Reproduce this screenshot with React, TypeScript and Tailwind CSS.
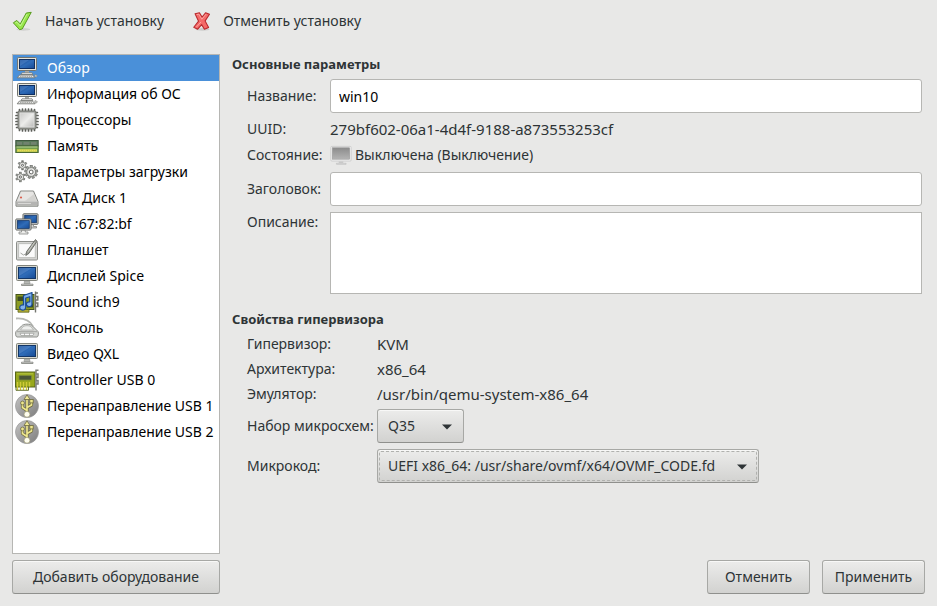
import React, { useState } from "react";

type IconProps = { className?: string };

const Svg = ({ children, className = "h-6 w-6" }: { children: React.ReactNode; className?: string }) => (
  <svg viewBox="0 0 24 24" className={`${className} shrink-0`} aria-hidden="true">
    {children}
  </svg>
);

const Defs = () => (
  <svg className="absolute h-0 w-0" aria-hidden="true">
    <defs>
      <linearGradient id="screen" x1="0" y1="0" x2="1" y2="1">
        <stop offset="0" stopColor="#17488f" />
        <stop offset="0.5" stopColor="#2f6cb8" />
        <stop offset="1" stopColor="#164a94" />
      </linearGradient>
      <linearGradient id="silver" x1="0" y1="0" x2="1" y2="1">
        <stop offset="0" stopColor="#c9c9c7" />
        <stop offset="0.5" stopColor="#ececea" />
        <stop offset="1" stopColor="#b9b9b7" />
      </linearGradient>
      <linearGradient id="usbGrey" x1="0" y1="0" x2="1" y2="1">
        <stop offset="0" stopColor="#c4c4c4" />
        <stop offset="1" stopColor="#7c7c7c" />
      </linearGradient>
      <linearGradient id="offScreen" x1="0" y1="0" x2="0" y2="1">
        <stop offset="0" stopColor="#8c8c8c" />
        <stop offset="1" stopColor="#b4b4b4" />
      </linearGradient>
    </defs>
  </svg>
);

const ComputerIcon = ({ className }: IconProps) => (
  <Svg className={className}>
    <rect x="2.5" y="1.5" width="19" height="13" rx="1" fill="#e4e4dc" stroke="#73756f" />
    <rect x="4.5" y="3.5" width="15" height="9" fill="url(#screen)" stroke="#0f2f62" />
    <path d="M5 4h9L5 10z" fill="#6d9fdc" opacity="0.35" />
    <path d="M10 15h4v2h-4z" fill="#a8aaa6" />
    <path d="M7 16.8h10l1 1.7H6z" fill="#f4f4f2" stroke="#777975" strokeWidth="0.8" />
    <path d="M4.500 19h13l2.600 2.800H2.200z" fill="#ededeb" stroke="#777975" strokeWidth="0.9" />
    <path d="M5 20.4h12" stroke="#8f918d" strokeWidth="0.8" strokeDasharray="1.5 0.7" />
    <path d="M20 18.500l2.400 1.200-1.200 1.500-1.500-.8z" fill="#d8d8d6" stroke="#7d7f7b" strokeWidth="0.6" />
  </Svg>
);

const DisplayIcon = ({ className }: IconProps) => (
  <Svg className={className}>
    <rect x="1.5" y="1.5" width="21" height="15" rx="1" fill="#d6d7cf" stroke="#82847c" />
    <rect x="3.5" y="3.5" width="17" height="11" fill="url(#screen)" stroke="#133666" />
    <path d="M4 4h13L4 12z" fill="#7aaae2" opacity="0.35" />
    <path d="M9.500 17h5l.6 2.500H9z" fill="#b8bab6" stroke="#8b8d89" strokeWidth="0.6" />
    <path d="M6.500 20.200h11.500v1.300H6.500z" fill="#f3f3f1" stroke="#888a85" strokeWidth="0.9" />
  </Svg>
);

const CpuIcon = ({ className }: IconProps) => (
  <Svg className={className}>
    <g stroke="#5c5e59" strokeWidth="1.7" strokeLinecap="round">
      <path d="M4.500 1.600v3M7.500 1v3M10.500 1v3M13.500 1v3M16.500 1v3M19.500 1.600v3" />
      <path d="M4.500 19.500v2.900M7.500 20v3M10.500 20v3M13.500 20v3M16.500 20v3M19.500 19.500v2.900" />
      <path d="M1.600 4.500h3M1 7.500h3M1 10.500h3M1 13.500h3M1 16.500h3M1.600 19.500h3" />
      <path d="M19.500 4.500h2.900M20 7.500h3M20 10.500h3M20 13.500h3M20 16.500h3M19.500 19.500h2.900" />
    </g>
    <rect x="3" y="3" width="18" height="18" rx="1.500" fill="#979994" stroke="#777973" />
    <rect x="5" y="5" width="14" height="14" fill="url(#silver)" stroke="#dededc" />
  </Svg>
);

const MemoryIcon = ({ className }: IconProps) => (
  <Svg className={className}>
    <rect x="0.8" y="6.500" width="22.400" height="5.500" fill="#5a7a5a" stroke="#3f5740" />
    <path d="M2 8h5v2.800H2zM8.500 8h6v2.800h-6zM16 8h5.500v2.800H16z" fill="#71836f" />
    <rect x="0.8" y="12" width="22.400" height="6.500" fill="#74a04a" stroke="#4b6a35" />
    <path d="M1.500 13h21" stroke="#b2cc9a" strokeWidth="1" />
    <path d="M2 16.500h20" stroke="#e6de58" strokeWidth="2.400" />
    <path d="M2 16.500h20" stroke="#b9bd4c" strokeWidth="1.600" strokeDasharray="0.500 1.500" />
  </Svg>
);

const Gear = ({ cx, cy, r, hole, teeth }: { cx: number; cy: number; r: number; hole: number; teeth: number }) => {
  const angles = Array.from({ length: teeth }, (_, i) => (360 / teeth) * i);
  return (
    <g>
      {angles.map((a) => (
        <rect
          key={a}
          x={cx - r * 0.22}
          y={cy - r * 1.3}
          width={r * 0.44}
          height={r * 0.7}
          fill="#a3a5a1"
          stroke="#6a6c68"
          strokeWidth="0.7"
          transform={`rotate(${a} ${cx} ${cy})`}
        />
      ))}
      <circle cx={cx} cy={cy} r={r * 0.88} fill="#e6e6e4" stroke="#6f716c" strokeWidth="0.7" />
      <circle cx={cx} cy={cy} r={hole} fill="#fff" stroke="#555753" strokeWidth="0.9" />
    </g>
  );
};

const GearsIcon = ({ className }: IconProps) => (
  <Svg className={className}>
    <Gear cx={7.5} cy={5.3} r={3.5} hole={1} teeth={6} />
    <Gear cx={5.4} cy={17} r={3.7} hole={1.1} teeth={6} />
    <Gear cx={16.2} cy={12} r={5} hole={1.9} teeth={9} />
  </Svg>
);

const DiskIcon = ({ className }: IconProps) => (
  <Svg className={className}>
    <path d="M5.500 5h13L23 15.500v4.700H1v-4.700z" fill="#d2d2d0" stroke="#858783" strokeLinejoin="round" />
    <path d="M6.200 5.800h11.700l3.900 9H2.200z" fill="#e6e5e3" />
    <path d="M10 15l9-7 2.300 7z" fill="#cfceca" opacity="0.8" />
    <path d="M1.800 15.700h20.400v3.700H1.800z" fill="#b4b4b2" />
    <circle cx="6" cy="11.500" r="1.100" fill="#d9604f" />
    <path d="M3 17.500h13" stroke="#d8d8d6" />
  </Svg>
);

const NetworkIcon = ({ className }: IconProps) => (
  <Svg className={className}>
    <rect x="8" y="1.800" width="15" height="10.500" rx="0.8" fill="#dededa" stroke="#5f615d" />
    <rect x="9.700" y="3.300" width="11.700" height="7.400" fill="url(#screen)" stroke="#133666" strokeWidth="0.8" />
    <path d="M15.500 12.500h3v2h3v1.500h-8z" fill="#d2d2d0" stroke="#777975" strokeWidth="0.7" />
    <rect x="0.800" y="7" width="15.200" height="11" rx="0.8" fill="#e4e4e0" stroke="#5f615d" />
    <rect x="2.500" y="8.600" width="11.800" height="7.800" fill="url(#screen)" stroke="#133666" strokeWidth="0.8" />
    <path d="M6.500 18.300h3.800v1.700h2.700v2H4v-2h2.500z" fill="#ededeb" stroke="#777975" strokeWidth="0.7" />
  </Svg>
);

const TabletIcon = ({ className }: IconProps) => (
  <Svg className={className}>
    <rect x="1.500" y="3.500" width="21" height="18.500" rx="1" fill="#d6d6d4" stroke="#8c8e8a" />
    <rect x="3.700" y="5.700" width="16.500" height="14" fill="#fafafa" stroke="#b5b7b3" strokeWidth="0.8" />
    <path d="M5.500 15l3 2 3-1.500" stroke="#a5a7a3" fill="none" />
    <path d="M20.500 1.500L22 3.300l-8 12-3.200 2.200.8-3.900z" fill="#9b9d96" stroke="#5b5d58" strokeWidth="0.8" />
    <path d="M19.500 4.300l-6.500 9.500" stroke="#d4d6d0" strokeWidth="0.9" />
  </Svg>
);

const SoundIcon = ({ className }: IconProps) => (
  <Svg className={className}>
    <rect x="1" y="4.500" width="18" height="15" fill="#8c9d24" stroke="#46541a" />
    <path d="M2.500 6.500h5.500v4.500h-5.500zM12 13.500h6v4h-6z" fill="#3c4c22" />
    <path d="M3 19.500h11v2.700h-11z" fill="#b2ad36" stroke="#5d6420" strokeWidth="0.8" />
    <path d="M20.500 1.500v21M20.500 3h2.500M20.500 6.500h2.300v3.500h-2.300M20.500 13h2.300v3.500h-2.300" stroke="#74766f" strokeWidth="1.400" fill="none" />
    <path d="M8.500 5.500l8.500-3v11.700a2.800 2.400 0 1 1-2.200-2.300V6.700L10.700 8v9.500A3 2.600 0 1 1 8.500 15z" fill="#82b2ec" stroke="#1a4c94" strokeWidth="1.200" strokeLinejoin="round" />
  </Svg>
);

const ConsoleIcon = ({ className }: IconProps) => (
  <Svg className={className}>
    <path d="M1 2.500c8-.5 14 2 17 8" fill="none" stroke="#b6b8b4" strokeWidth="1.800" />
    <path d="M6.500 10c2-2.500 9-2.500 11 0l5.500 5.500c.8 1.500.4 5.500-1 5.500H2c-1.400 0-1.800-4-1-5.500z" fill="#d3d5d2" stroke="#8f918d" />
    <path d="M8 10.800c2-1.500 6-1.500 8 0l2.500 3.200h-13z" fill="#eff0ee" stroke="#a9aba7" strokeWidth="0.700" />
    <path d="M2 15.700h20" stroke="#a0a29e" />
    <path d="M5 17.300h14l-1 2.200H6z" fill="#f8f8f8" stroke="#999b97" strokeWidth="0.700" />
    <path d="M9.500 17.300v2.200M14.500 17.300v2.200" stroke="#999b97" strokeWidth="0.700" />
  </Svg>
);

const CardIcon = ({ className }: IconProps) => (
  <Svg className={className}>
    <rect x="0.500" y="4" width="19.500" height="15" fill="#98a81c" stroke="#56651a" />
    <rect x="4" y="7.500" width="12.500" height="4.500" rx="0.800" fill="#4a5636" stroke="#7c8c3c" strokeWidth="0.800" />
    <path d="M2 5.800h16" stroke="#b6c545" />
    <path d="M2.500 14v8M5.500 14v8M8.500 14v8M11.500 14v8M14.500 14v4.500" stroke="#cfca38" strokeWidth="1.400" />
    <path d="M1 19v3.300h12.500V19" stroke="#56651a" fill="none" strokeWidth="0.900" />
    <path d="M21 1.500v21M21 2.300h2.500M21 6h2v3.500h-2M21 12.500h2v3.500h-2" stroke="#7c7e79" strokeWidth="1.500" fill="none" />
  </Svg>
);

const UsbIcon = ({ className }: IconProps) => (
  <Svg className={className}>
    <circle cx="12" cy="12" r="11.500" fill="url(#usbGrey)" stroke="#999" strokeWidth="0.700" />
    <g fill="none" stroke="#6d6940" strokeWidth="3.200" strokeLinejoin="round">
      <path d="M12 4v15M12 16.500l-4.500-3V9.500M12 13.500l4.500-2.500V7.500" />
    </g>
    <g fill="none" stroke="#eee78e" strokeWidth="1.700">
      <path d="M12 4v15M12 16.500l-4.500-3V9.500M12 13.500l4.500-2.500V7.500" />
    </g>
    <path d="M12 0.800l3 4.700H9z" fill="#f1eb98" stroke="#6d6940" strokeWidth="0.800" />
    <circle cx="7.500" cy="9" r="1.900" fill="#eee78e" stroke="#6d6940" strokeWidth="0.800" />
    <rect x="14.800" y="5.500" width="3.400" height="3.400" fill="#eee78e" stroke="#6d6940" strokeWidth="0.800" />
    <circle cx="12" cy="20.300" r="2.900" fill="#fffef0" stroke="#a5a17a" strokeWidth="0.700" />
  </Svg>
);

const OffIcon = ({ className }: IconProps) => (
  <Svg className={className}>
    <rect x="1" y="1.500" width="22" height="16" rx="1" fill="#f4f4f4" stroke="#cacaca" />
    <rect x="2.500" y="3" width="19" height="12.500" fill="url(#offScreen)" stroke="#989898" strokeWidth="0.600" />
    <path d="M9.500 18h5v1.500h-5z" fill="#c6c6c6" />
    <path d="M7 20h10.500v1H7z" fill="#f6f6f6" stroke="#bababa" strokeWidth="0.800" />
  </Svg>
);

const CheckIcon = ({ className }: IconProps) => (
  <Svg className={className}>
    <ellipse cx="13" cy="21" rx="8" ry="1.500" fill="#000" opacity="0.100" />
    <path d="M1.500 13.500L5.500 10.800l3.900 4L16.300 2.300l5.700-.8L11.700 20.500 8.700 21.300z" fill="#98e64b" stroke="#55991c" strokeWidth="1.100" strokeLinejoin="round" />
    <path d="M3.800 13.600l1.500-1 4.300 4.500L17.200 3.500" fill="none" stroke="#cdf7a2" />
  </Svg>
);

const CrossIcon = ({ className }: IconProps) => (
  <Svg className={className}>
    <ellipse cx="12" cy="21" rx="8" ry="1.500" fill="#000" opacity="0.120" />
    <path d="M3.500 3.200l5-1.200 3 5 4-5 4.500 1.700-5 7.600 4 7.500-4.800 2-3.200-5.200-4.500 5.200-4.500-2.200 5.500-7z" fill="#f46a69" stroke="#b8282c" strokeWidth="1.200" strokeLinejoin="round" />
    <path d="M5.300 4.200l2.500-.6 3.500 5.800 4.800-5.800M10.300 12.500l-5.500 6" fill="none" stroke="#fba9a5" />
  </Svg>
);

const devices: { label: string; Icon: (p: IconProps) => React.ReactElement }[] = [
  { label: "Обзор", Icon: ComputerIcon },
  { label: "Информация об ОС", Icon: ComputerIcon },
  { label: "Процессоры", Icon: CpuIcon },
  { label: "Память", Icon: MemoryIcon },
  { label: "Параметры загрузки", Icon: GearsIcon },
  { label: "SATA Диск 1", Icon: DiskIcon },
  { label: "NIC :67:82:bf", Icon: NetworkIcon },
  { label: "Планшет", Icon: TabletIcon },
  { label: "Дисплей Spice", Icon: DisplayIcon },
  { label: "Sound ich9", Icon: SoundIcon },
  { label: "Консоль", Icon: ConsoleIcon },
  { label: "Видео QXL", Icon: DisplayIcon },
  { label: "Controller USB 0", Icon: CardIcon },
  { label: "Перенаправление USB 1", Icon: UsbIcon },
  { label: "Перенаправление USB 2", Icon: UsbIcon },
];

const raised =
  "h-[34px] rounded-[3px] border border-[#a7a8a5] border-b-[#8f908d] bg-linear-to-b from-[#ececeb] to-[#d2d2d0] shadow-[inset_0_1px_0_#f8f8f7]";
const field = "w-full rounded-[3px] border border-[#b6b6b3] bg-white px-2 text-black outline-none";

const Select = ({ id, options, width, focused = false }: { id: string; options: string[]; width: string; focused?: boolean }) => (
  <div className={`relative ${width}`}>
    <select id={id} className={`${raised} w-full appearance-none pr-6 pl-[10px] outline-none`}>
      {options.map((o) => (
        <option key={o}>{o}</option>
      ))}
    </select>
    {focused && <span className="pointer-events-none absolute inset-[2px] rounded-[2px] border border-dashed border-[#b0b1ae]" />}
    <svg viewBox="0 0 10 6" className="pointer-events-none absolute top-[15px] right-[12px] h-[6px] w-[10px]" aria-hidden="true">
      <path d="M0 0.500h10L5 5.500z" fill="#2e3436" />
    </svg>
  </div>
);

export default function App() {
  const [active, setActive] = useState(0);
  return (
    <div className="flex min-h-screen flex-col bg-[#e8e8e7] font-['Noto_Sans','Open_Sans',sans-serif] text-[14px] leading-5 text-[#2e3436]">
      <Defs />
      <header className="flex h-[42px] items-center gap-7 px-3">
        <button className="flex items-center gap-3">
          <CheckIcon className="h-[21px] w-[21px]" />
          Начать установку
        </button>
        <button className="flex items-center gap-[10px]">
          <CrossIcon className="h-[21px] w-[21px]" />
          Отменить установку
        </button>
      </header>

      <main className="flex flex-1 gap-3 px-3 pt-3">
        <nav className="w-[208px] shrink-0 border border-[#b6b6b3] bg-white">
          <ul>
            {devices.map(({ label, Icon }, i) => (
              <li key={label}>
                <button
                  onClick={() => setActive(i)}
                  className={`flex h-[26px] w-full items-center gap-2 pl-[2px] text-left whitespace-nowrap ${i === active ? "bg-[#4a90d9] text-white" : "text-black"}`}
                >
                  <Icon />
                  {label}
                </button>
              </li>
            ))}
          </ul>
        </nav>

        <div className="min-w-0 flex-1 pr-[3px]">
          <section>
            <h2 className="text-[13px] font-bold">Основные параметры</h2>
            <div className="mt-[5px] grid grid-cols-[77px_1fr] items-center gap-[6px] pl-[15px] whitespace-nowrap">
              <label htmlFor="name">Название:</label>
              <input id="name" defaultValue="win10" className={`${field} h-[34px]`} />
              <span>UUID:</span>
              <span className="text-[15px]">279bf602-06a1-4d4f-9188-a873553253cf</span>
              <span className="h-[21px]">Состояние:</span>
              <span className="flex h-[21px] items-start gap-[3px]">
                <OffIcon className="h-[22px] w-[22px]" />
                Выключена (Выключение)
              </span>
              <label htmlFor="title">Заголовок:</label>
              <input id="title" className={`${field} h-[34px]`} />
              <label htmlFor="description" className="self-start">
                Описание:
              </label>
              <textarea id="description" className={`${field} block h-[82px] resize-none rounded-none`} />
            </div>
          </section>

          <section className="mt-[15px]">
            <h2 className="text-[13px] font-bold">Свойства гипервизора</h2>
            <div className="mt-[5px] grid grid-cols-[124px_1fr] items-center gap-[6px] pl-[15px] whitespace-nowrap">
              <span className="h-[19px]">Гипервизор:</span>
              <span className="h-[19px] text-[15px]">KVM</span>
              <span className="h-[19px]">Архитектура:</span>
              <span className="h-[19px] text-[15px]">x86_64</span>
              <span className="h-[19px]">Эмулятор:</span>
              <span className="h-[19px] text-[15px]">/usr/bin/qemu-system-x86_64</span>
              <label htmlFor="chipset">Набор микросхем:</label>
              <Select id="chipset" options={["Q35", "i440FX"]} width="w-[87px]" />
              <label htmlFor="firmware">Микрокод:</label>
              <Select id="firmware" options={["UEFI x86_64: /usr/share/ovmf/x64/OVMF_CODE.fd", "BIOS"]} width="w-[382px]" focused />
            </div>
          </section>
        </div>
      </main>

      <footer className="flex items-center gap-3 px-3 pt-[6px] pb-3">
        <button className={`${raised} w-[208px]`}>Добавить оборудование</button>
        <button className={`${raised} ml-auto w-[103px]`}>Отменить</button>
        <button className={`${raised} w-[103px]`}>Применить</button>
      </footer>
    </div>
  );
}
